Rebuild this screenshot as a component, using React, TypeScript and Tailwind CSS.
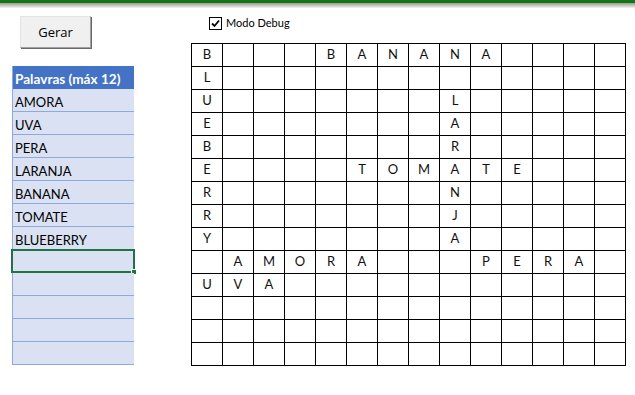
import React from 'react';

const WORDS = ['AMORA', 'UVA', 'PERA', 'LARANJA', 'BANANA', 'TOMATE', 'BLUEBERRY', '', '', '', '', ''];

// grid letters, '.' = empty cell
const GRID = [
  'B...BANANA....',
  'L.............',
  'U.......L.....',
  'E.......A.....',
  'B.......R.....',
  'E....TOMATE...',
  'R.......N.....',
  'R.......J.....',
  'Y.......A.....',
  '.AMORA...PERA.',
  'UVA...........',
  '..............',
  '..............',
  '..............',
];

const font = { fontFamily: 'Lato, "Open Sans", sans-serif' };

const WordList: React.FunctionComponent = () => {
  return (
    <div className="w-[122px] border-l border-[#8ea9db]" style={font}>
      <div className="h-[23px] bg-[#4472c4] text-white font-bold text-[13.6px] leading-[20px] pt-[3px] pl-[2px]">
        Palavras (máx 12)
      </div>
      {WORDS.map((w, i) => (
        <div
          key={i}
          className="relative h-[23px] bg-[#d9e1f2] border-b border-[#8ea9db] text-[13px] leading-[20px] pt-[3px] pl-[2px] text-black"
        >
          {w}
          {i === 7 ? (
            <>
              <span className="absolute -left-[2px] -top-[1px] -right-[1px] -bottom-[1px] border-2 border-[#217346]" />
              <span className="absolute -right-[3px] -bottom-[3px] w-[6px] h-[6px] bg-[#217346] border border-white" />
            </>
          ) : (
            ''
          )}
        </div>
      ))}
    </div>
  );
};

const LetterGrid: React.FunctionComponent = () => {
  return (
    <div className="grid grid-cols-[repeat(14,31px)] w-fit border-l border-t border-black" style={font}>
      {GRID.flatMap((row, r) =>
        row.split('').map((ch, c) => (
          <div
            key={`${r}-${c}`}
            className="h-[23px] border-r border-b border-black flex items-center justify-center text-[13px] text-[#111]"
          >
            {ch === '.' ? '' : ch}
          </div>
        ))
      )}
    </div>
  );
};

export default function App() {
  return (
    <div className="w-[635px] h-[395px] bg-white overflow-hidden">
      <div className="h-[3px] bg-[#127512]" />
      <div className="h-[5px] bg-gradient-to-b from-[#9a9a9a] to-[#f2f2f2]" />
      <div className="flex">
        <div className="pl-[12px] w-[191px] flex flex-col">
          <button
            className="ml-[8px] mt-[8px] w-[71px] h-[32px] bg-[#f0f0f0] border border-[#e3e3e3] border-r-[#a0a0a0] border-b-[#a0a0a0] shadow-[1px_1px_0_#696969] text-[13px] text-black pt-[2px]"
            style={{ fontFamily: '"Open Sans", Lato, sans-serif' }}
          >
            Gerar
          </button>
          <div className="mt-[18px]">
            <WordList />
          </div>
        </div>
        <div className="flex flex-col">
          <label className="ml-[18px] mt-[9px] h-[13px] flex items-center gap-[4px] text-[11px] text-black" style={font}>
            <span className="w-[13px] h-[13px] border border-black bg-white flex items-center justify-center">
              <svg width="9" height="9" viewBox="0 0 9 9">
                <path d="M1 4.5 L3.5 7 L8 1.5" fill="none" stroke="#000" strokeWidth="1.8" />
              </svg>
            </span>
            Modo Debug
          </label>
          <div className="mt-[13px]">
            <LetterGrid />
          </div>
        </div>
      </div>
    </div>
  );
}
